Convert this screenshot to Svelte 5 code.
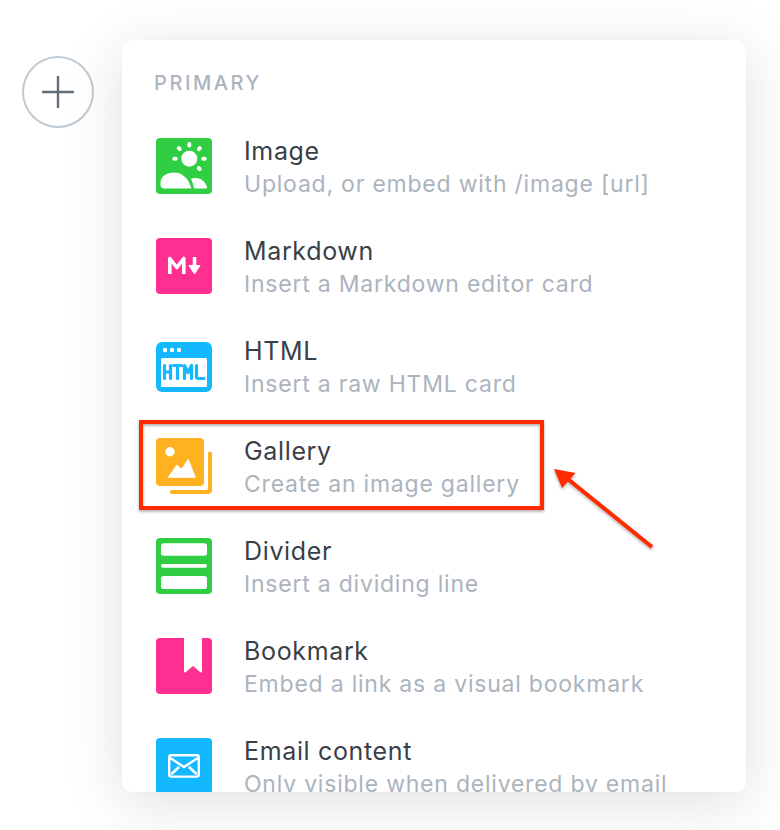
<script>
  const items = [
    { name: 'image', title: 'Image', desc: 'Upload, or embed with /image [url]', color: '#30cf43' },
    { name: 'markdown', title: 'Markdown', desc: 'Insert a Markdown editor card', color: '#ff2f92' },
    { name: 'html', title: 'HTML', desc: 'Insert a raw HTML card', color: '#14b8ff' },
    { name: 'gallery', title: 'Gallery', desc: 'Create an image gallery', color: '#ffb11f' },
    { name: 'divider', title: 'Divider', desc: 'Insert a dividing line', color: '#30cf43' },
    { name: 'bookmark', title: 'Bookmark', desc: 'Embed a link as a visual bookmark', color: '#ff2f92' },
    { name: 'email', title: 'Email content', desc: 'Only visible when delivered by email', color: '#14b8ff' }
  ];
</script>

<div class="page">
  <button class="plus" aria-label="Add card">
    <svg width="32" height="32" viewBox="0 0 32 32">
      <path d="M16 1v30M1 16h30" stroke="#626d79" stroke-width="2.4" stroke-linecap="round" fill="none" />
    </svg>
  </button>

  <div class="menu">
    <div class="heading">PRIMARY</div>
    {#each items as item}
      <div class="item">
        <svg class="icon" width="56" height="56" viewBox="0 0 56 56">
          {#if item.name === 'gallery'}
            <rect width="48" height="48" rx="4" fill={item.color} />
            <path d="M52 15.5a2 2 0 0 1 4 0V52a4 4 0 0 1-4 4H16a2 2 0 0 1 0-4h34a2 2 0 0 0 2-2z" fill={item.color} />
            <circle cx="14" cy="13.7" r="4.7" fill="#fff" />
            <path d="M12 39.5 20.7 27l5 4 6.600-10 7.200 18.500z" fill="#fff" stroke="#fff" stroke-width="0.6" stroke-linejoin="round" />
          {:else if item.name === 'html'}
            <rect y="4" width="56" height="50" rx="6" fill={item.color} />
          {:else}
            <rect width="56" height="56" rx="4" fill={item.color} />
          {/if}

          {#if item.name === 'image'}
            <circle cx="33.3" cy="20.7" r="8" fill="#fff" />
            <path d="M33.3 6v1.400M22.800 10.200l.9.900M43.800 10.200l-.9.900M18.300 20.700h1.400M47.300 20.700h1.400M42.800 30.200l.9.900" stroke="#fff" stroke-width="4" stroke-linecap="round" />
            <path d="M8 50.500c-2 0-3.500-1.500-3.500-3.500v-2C4.500 38 11 34.500 18 34.500c8 0 14 5 17.500 16z" fill="#fff" />
            <path d="M38 50.500h12c1 0 1.500-1 1-2-2-5-6-8.500-11-8.500-2 0-3.500.3-5 1 1.500 3 2.500 6 3 9.500z" fill="#fff" />
          {:else if item.name === 'markdown'}
            <path d="M13.800 36V20.500l7 9 7-9V36" stroke="#fff" stroke-width="3.6" fill="none" stroke-linejoin="round" />
            <path d="M38.500 19v11" stroke="#fff" stroke-width="3.6" />
            <path d="M33 27.500h11l-5.500 8.500z" fill="#fff" stroke="#fff" stroke-linejoin="round" />
          {:else if item.name === 'html'}
            <circle cx="9" cy="12" r="2.2" fill="#fff" />
            <circle cx="16" cy="12" r="2.2" fill="#fff" />
            <circle cx="23" cy="12" r="2.2" fill="#fff" />
            <rect x="5" y="20" width="46" height="29" rx="1.5" fill="#fff" />
            <path d="M8.500 27.500v13M14.500 27.500v13M8.500 34h6M17.500 27.500h8M21.500 27.500v13M28.500 40.500v-13l3.500 7 3.500-7v13M40.500 27.500v11a2 2 0 0 0 2 2h5.500" stroke={item.color} stroke-width="3.2" fill="none" stroke-linecap="round" stroke-linejoin="round" />
          {:else if item.name === 'divider'}
            <rect x="5" y="5.3" width="46" height="12.4" rx="2.5" fill="#fff" />
            <rect x="5" y="26" width="46" height="3.7" rx="1.8" fill="#fff" />
            <rect x="5" y="38" width="46" height="13" rx="2.5" fill="#fff" />
          {:else if item.name === 'bookmark'}
            <path d="M28 0h18v33.500a1 1 0 0 1-1.700.7L37 28l-7.300 6.200a1 1 0 0 1-1.700-.7z" fill="#fff" />
          {:else if item.name === 'email'}
            <rect x="13.2" y="17.2" width="29.6" height="21.4" rx="2" fill="none" stroke="#fff" stroke-width="2.4" />
            <path d="M15 20.500l13 8.500 13-8.500M16 35.500l6.500-6M40 35.500l-6.500-6" fill="none" stroke="#fff" stroke-width="2.4" stroke-linecap="round" />
          {/if}
        </svg>
        <div class="text">
          <div class="title">{item.title}</div>
          <div class="desc">{item.desc}</div>
        </div>
      </div>
    {/each}
  </div>

  <!-- annotation drawn over the screenshot -->
  <svg class="note" width="780" height="830" viewBox="0 0 780 830">
    <defs>
      <filter id="drop" x="-10%" y="-10%" width="120%" height="125%">
        <feDropShadow dx="0" dy="1.5" stdDeviation="1.5" flood-color="#000" flood-opacity="0.35" />
      </filter>
    </defs>
    <g filter="url(#drop)">
      <rect x="141" y="422" width="401" height="86" fill="none" stroke="#ff2a00" stroke-width="4" />
      <path d="M652 547 569 480" stroke="#ff2a00" stroke-width="4" />
      <path d="M554 469l21.500 4-13.500 15z" fill="#ff2a00" />
    </g>
  </svg>
</div>

<style>
  :global(body) {
    margin: 0;
    background: #fff;
  }
  .page {
    position: relative;
    width: 780px;
    height: 830px;
    overflow: hidden;
    display: flex;
    align-items: flex-start;
    padding: 40px 0 0 22px;
    box-sizing: border-box;
    font-family: Inter, "Noto Sans", sans-serif;
  }
  .plus {
    flex: none;
    width: 72px;
    height: 72px;
    margin-top: 16px;
    padding: 0;
    border: 2px solid #c0cad3;
    border-radius: 50%;
    background: #fff;
    display: flex;
    align-items: center;
    justify-content: center;
  }
  .menu {
    flex: none;
    width: 624px;
    height: 752px;
    margin-left: 28px;
    overflow: hidden;
    box-sizing: border-box;
    padding: 30px 0 0 32px;
    background: #fff;
    border-radius: 10px;
    box-shadow: 0 0 1px rgba(0, 0, 0, 0.04), 0 10px 60px rgba(0, 0, 0, 0.13);
  }
  .heading {
    font-size: 20px;
    line-height: 26px;
    font-weight: 500;
    letter-spacing: 2.55px;
    color: #abb4be;
    margin-bottom: 42px;
  }
  .item {
    display: flex;
    align-items: flex-start;
    height: 100px;
    padding-left: 2px;
  }
  .icon {
    flex: none;
    display: block;
  }
  .text {
    margin-left: 32px;
    margin-top: -3px;
  }
  .title {
    font-size: 25px;
    line-height: 33px;
    letter-spacing: 0.65px;
    color: #394047;
  }
  .desc {
    font-size: 23px;
    line-height: 32px;
    letter-spacing: 0.78px;
    color: #abb4be;
  }
  .note {
    position: absolute;
    left: 0;
    top: 0;
    pointer-events: none;
  }
</style>
